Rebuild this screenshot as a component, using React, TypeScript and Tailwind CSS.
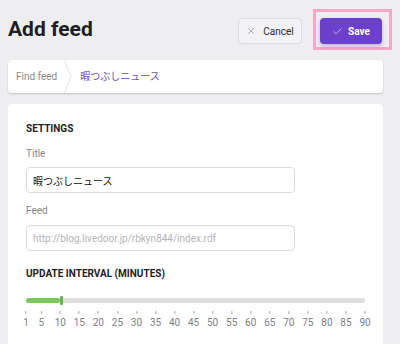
import { Check, X } from 'lucide-react'

/* ─────────────────────────────────────────────────────────────────
   DATA
───────────────────────────────────────────────────────────────── */
const ticks = [1, 5, 10, 15, 20, 25, 30, 35, 40, 45, 50, 55, 60, 65, 70, 75, 80, 85, 90]
const MIN = 1
const MAX = 90
const VALUE = 10

const font = { fontFamily: 'Roboto, "Noto Sans CJK JP", sans-serif' }

/* ─────────────────────────────────────────────────────────────────
   COMPONENT
───────────────────────────────────────────────────────────────── */
export default function App() {
  const pct = (v: number) => ((v - MIN) / (MAX - MIN)) * 100

  return (
    <div
      className="w-[400px] h-[344px] overflow-hidden bg-[#eeeef0] pl-2 pr-[17px]"
      style={font}
    >
      {/* ── Header ── */}
      <div className="flex items-center h-[60px]">
        <h1 className="text-[21px] leading-none font-bold text-[#1d1d24] mt-[-2px]">
          Add feed
        </h1>
        <div className="ml-auto flex items-center gap-[11px] mr-[-9px] mt-[-1px]">
          <button className="flex items-center justify-center gap-[7px] h-[26px] w-[64px] rounded-[4px] border border-[#dcdce0] bg-[#f3f3f5] text-[10px] text-[#2a2a2a] mt-[3px]">
            <X size={10} strokeWidth={1.4} className="text-[#777]" />
            Cancel
          </button>
          <div className="border-[3px] border-[#f5a8c8] pl-[4px] pr-[7px] pt-[6px] pb-[3px]">
            <button className="flex items-center justify-center gap-[5px] h-[26px] w-[62px] rounded-[4px] bg-[#6a40cd] text-[10px] font-bold text-white shadow-[0_2px_4px_rgba(80,40,160,0.3)]">
              <Check size={11} strokeWidth={1.3} />
              Save
            </button>
          </div>
        </div>
      </div>

      {/* ── Breadcrumb ── */}
      <div className="flex items-center h-[33px] rounded-[4px] bg-white shadow-[0_1px_2px_rgba(0,0,0,0.18)] text-[10px]">
        <span className="pl-[8px] pr-[7px] text-[#8a8a8a]">Find feed</span>
        <svg width="8" height="33" viewBox="0 0 8 33" className="shrink-0">
          <path d="M0.5 0 L7 16.5 L0.5 33" fill="none" stroke="#e4e4e6" strokeWidth="1" />
        </svg>
        <span className="pl-[8px] text-[#6a4cc4]">暇つぶしニュース</span>
      </div>

      {/* ── Settings card ── */}
      <div className="mt-[11px] rounded-[4px] bg-white px-[18px] pt-[18px] h-[260px]">
        <h2 className="text-[10px] leading-[14px] font-bold text-[#222]">SETTINGS</h2>

        <label className="block mt-[11px] text-[10px] leading-[14px] text-[#888]">Title</label>
        <input
          className="mt-[6px] block w-[269px] h-[26px] rounded-[4px] border border-[#dcdce0] px-[6px] text-[10px] text-[#111] outline-none"
          defaultValue="暇つぶしニュース"
        />

        <label className="block mt-[11px] text-[10px] leading-[14px] text-[#888]">Feed</label>
        <input
          className="mt-[7px] block w-[269px] h-[26px] rounded-[4px] border border-[#dcdce0] px-[6px] text-[10px] placeholder:text-[#b4b4b8] outline-none"
          placeholder="http://blog.livedoor.jp/rbkyn844/index.rdf"
        />

        <h2 className="mt-[16px] text-[10px] leading-[14px] font-bold text-[#222]">
          UPDATE INTERVAL (MINUTES)
        </h2>

        {/* Slider */}
        <div className="relative mt-[15px] w-[339px] h-[9px]">
          <div className="absolute left-0 right-0 top-[2px] h-[5px] rounded-full bg-[#dedee0]" />
          <div
            className="absolute left-0 top-[2px] h-[5px] rounded-full bg-[#7cc75c]"
            style={{ width: `${pct(VALUE)}%` }}
          />
          <div
            className="absolute top-0 h-[9px] w-[3px] rounded-[1px] bg-[#68ba48]"
            style={{ left: `${pct(VALUE)}%` }}
          />
        </div>

        <div className="relative mt-[6px] w-[339px] h-[20px]">
          {ticks.map((t) => (
            <div
              key={t}
              className="absolute top-0 flex flex-col items-center -translate-x-1/2"
              style={{ left: `${pct(t)}%` }}
            >
              <div className="w-px h-[3px] bg-[#aaa]" />
              <span className="mt-[4px] text-[10px] leading-none text-[#808080]">{t}</span>
            </div>
          ))}
        </div>
      </div>
    </div>
  )
}
